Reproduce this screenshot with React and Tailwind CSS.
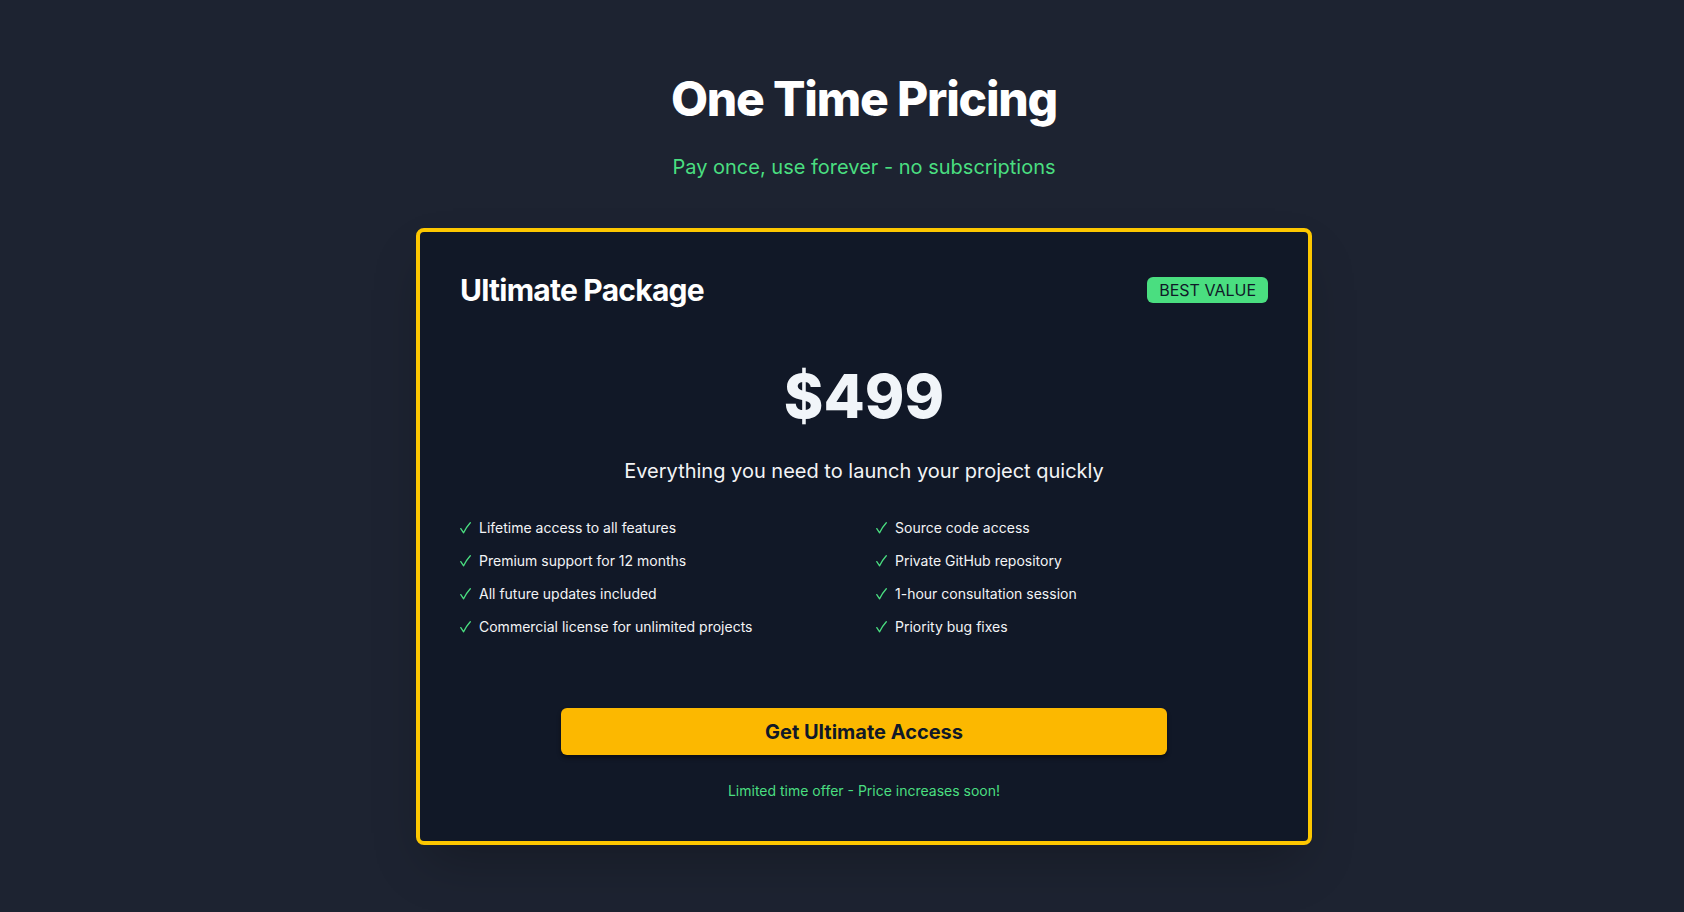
const features = [
  "Lifetime access to all features",
  "Source code access",
  "Premium support for 12 months",
  "Private GitHub repository",
  "All future updates included",
  "1-hour consultation session",
  "Commercial license for unlimited projects",
  "Priority bug fixes",
];

function Check() {
  return (
    <svg width="11" height="12" viewBox="0 0 11 12" className="mr-2 shrink-0" fill="none">
      <path
        d="M0.8 6.6 L3.6 10.8 Q6 5.5 10.3 0.8"
        stroke="#4ade80"
        strokeWidth="1.3"
        strokeLinecap="round"
        strokeLinejoin="round"
      />
    </svg>
  );
}

export default function App() {
  return (
    <div
      className="min-h-screen bg-[#1d2331] pl-[44px] pt-[75px] pb-16"
      style={{ fontFamily: "Inter, 'Noto Sans', sans-serif" }}
    >
      <div className="flex flex-col items-center">
        <h1 className="text-5xl leading-none font-extrabold tracking-tight text-white mb-[30px]">
          One Time Pricing
        </h1>
        <p className="text-xl text-[#4ade80] mb-[47px]">
          Pay once, use forever - no subscriptions
        </p>

        {/* Pricing card */}
        <div className="w-full max-w-4xl bg-[#111827] border-4 border-yellow-400 rounded-lg p-10 shadow-2xl">
          <div className="flex items-center justify-between">
            <h2 className="text-3xl font-bold text-white tracking-tight">Ultimate Package</h2>
            <span className="bg-[#4ade80] text-gray-900 text-base leading-6 px-3 py-px rounded-md">
              BEST VALUE
            </span>
          </div>

          <div className="mt-[58px] text-center text-6xl leading-none font-extrabold text-slate-100">
            $499
          </div>

          <p className="mt-[31px] text-center text-xl text-gray-100">
            Everything you need to launch your project quickly
          </p>

          <ul className="mt-[33px] grid grid-cols-2 gap-x-6 gap-y-[13px]">
            {features.map((f) => (
              <li key={f} className="flex items-center text-sm leading-5 text-gray-100">
                <Check />
                <span>{f}</span>
              </li>
            ))}
          </ul>

          <div className="mt-[71px] flex justify-center">
            <button className="w-3/4 bg-[#fcb800] text-gray-900 text-xl font-bold py-[9.5px] rounded-md shadow-[0_3px_4px_rgba(0,0,0,0.45)]">
              Get Ultimate Access
            </button>
          </div>

          <p className="mt-[26px] text-center text-sm text-[#4ade80]">
            Limited time offer - Price increases soon!
          </p>
        </div>
      </div>
    </div>
  );
}
